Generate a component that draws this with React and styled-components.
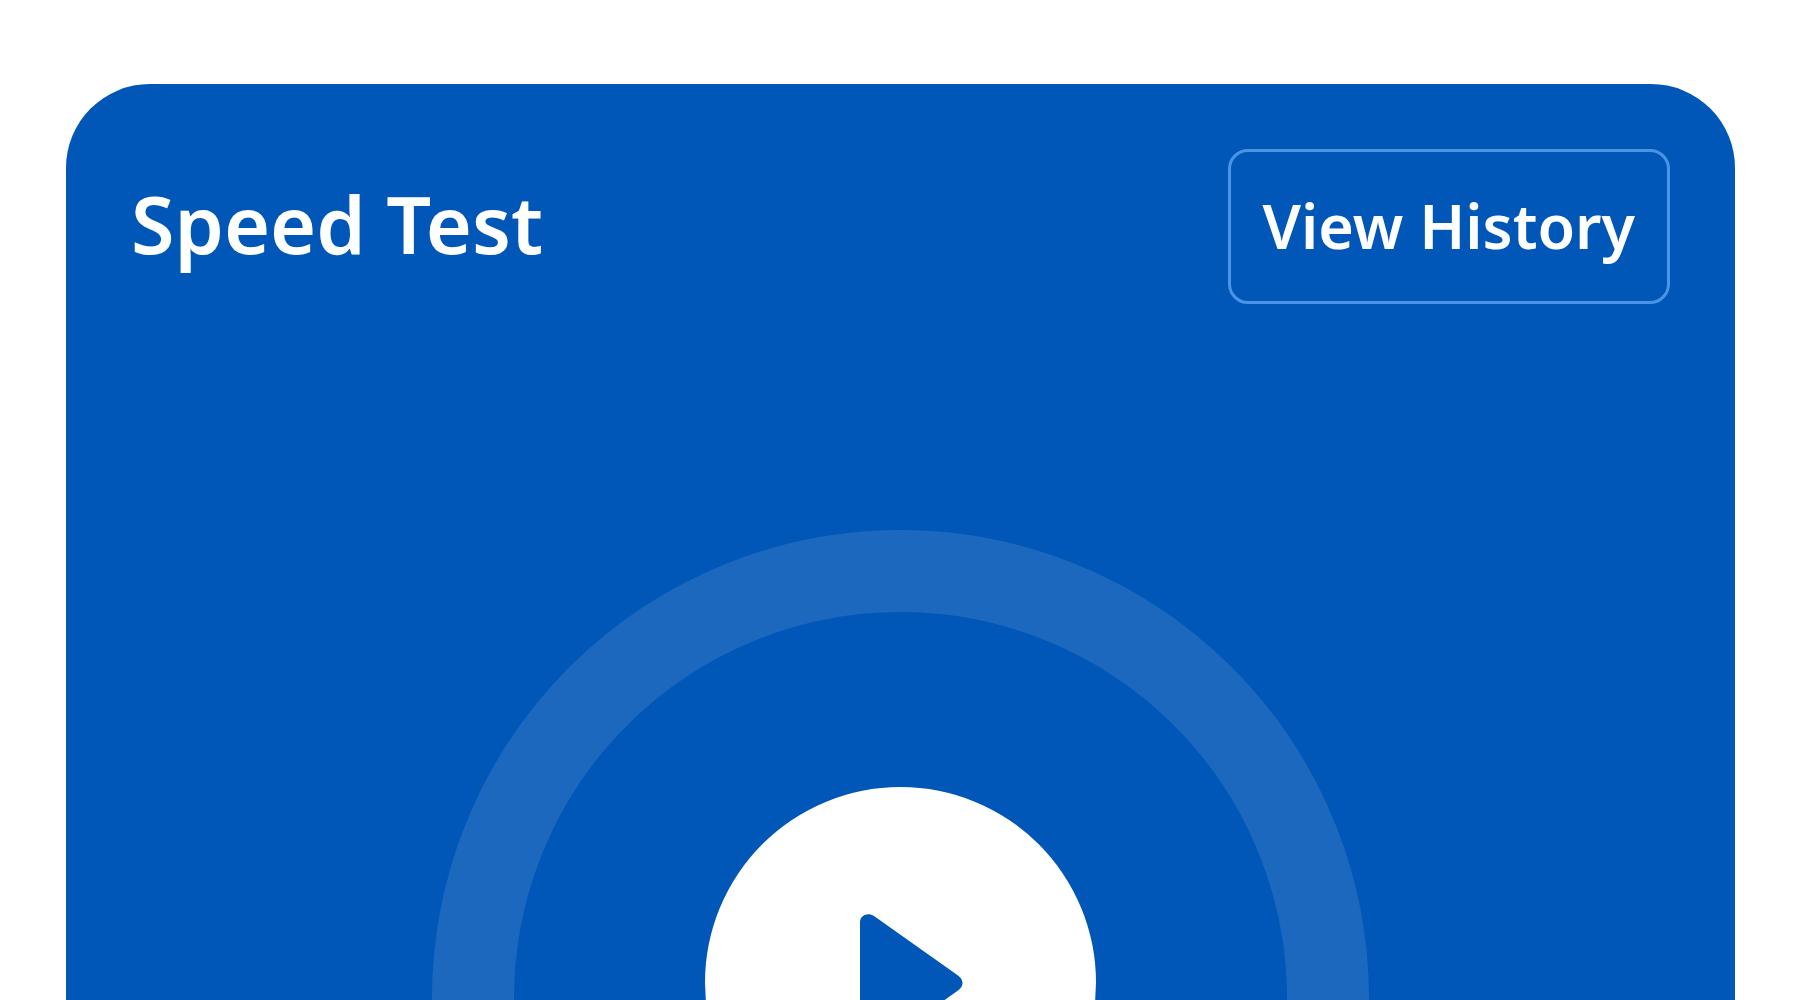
import React from 'react';
import styled, { createGlobalStyle } from 'styled-components';

const GlobalStyle = createGlobalStyle`
	* {
		box-sizing: border-box;
	}

	body {
		margin: 0;
		background-color: #ffffff;
		font-family: 'Noto Sans', 'Open Sans', sans-serif;
	}
`;

const Page = styled.main`
	padding: 84px 65px 84px 66px;
`;

const Card = styled.section`
	padding: 65px;
	border-radius: 84px;
	background-color: #0057b7;
	color: #ffffff;
`;

const Header = styled.header`
	display: flex;
	align-items: center;
	justify-content: space-between;
`;

const Title = styled.h1`
	margin: 0;
	padding-bottom: 6px;
	font-size: 79px;
	font-weight: 600;
	line-height: 104px;
`;

const HistoryButton = styled.button`
	padding: 33px 32px 35px;
	border: 3px solid #4a94e6;
	border-radius: 20px;
	background: transparent;
	color: inherit;
	font-family: inherit;
	font-size: 61px;
	font-weight: 600;
	line-height: 81px;
	cursor: pointer;
`;

const Gauge = styled.div`
	display: flex;
	justify-content: center;
	align-items: flex-start;
	width: 937px;
	height: 937px;
	margin: 226px auto 0;
	padding-top: 175px;
	border: 82px solid rgba(255, 255, 255, 0.105);
	border-radius: 50%;
`;

const StartButton = styled.button`
	display: flex;
	align-items: center;
	justify-content: center;
	width: 391px;
	height: 391px;
	padding: 0 0 0 22px;
	border: 0;
	border-radius: 50%;
	background-color: #ffffff;
	color: #0057b7;
	cursor: pointer;
`;

function PlayIcon() {
	return (
		<svg width="103" height="138" viewBox="0 0 103 138" aria-hidden="true">
			<path
				d="M0 8.500C0 1 8 -2 14 2L98 61.500C104 65.500 104 72.500 98 76.500L14 136C8 140 0 137 0 129.500Z"
				fill="currentColor"
			/>
		</svg>
	);
}

export default function App() {
	return (
		<>
			<GlobalStyle />
			<Page>
				<Card>
					<Header>
						<Title>Speed Test</Title>
						<HistoryButton type="button">View History</HistoryButton>
					</Header>
					<Gauge>
						<StartButton type="button" aria-label="Start speed test">
							<PlayIcon />
						</StartButton>
					</Gauge>
				</Card>
			</Page>
		</>
	);
}
